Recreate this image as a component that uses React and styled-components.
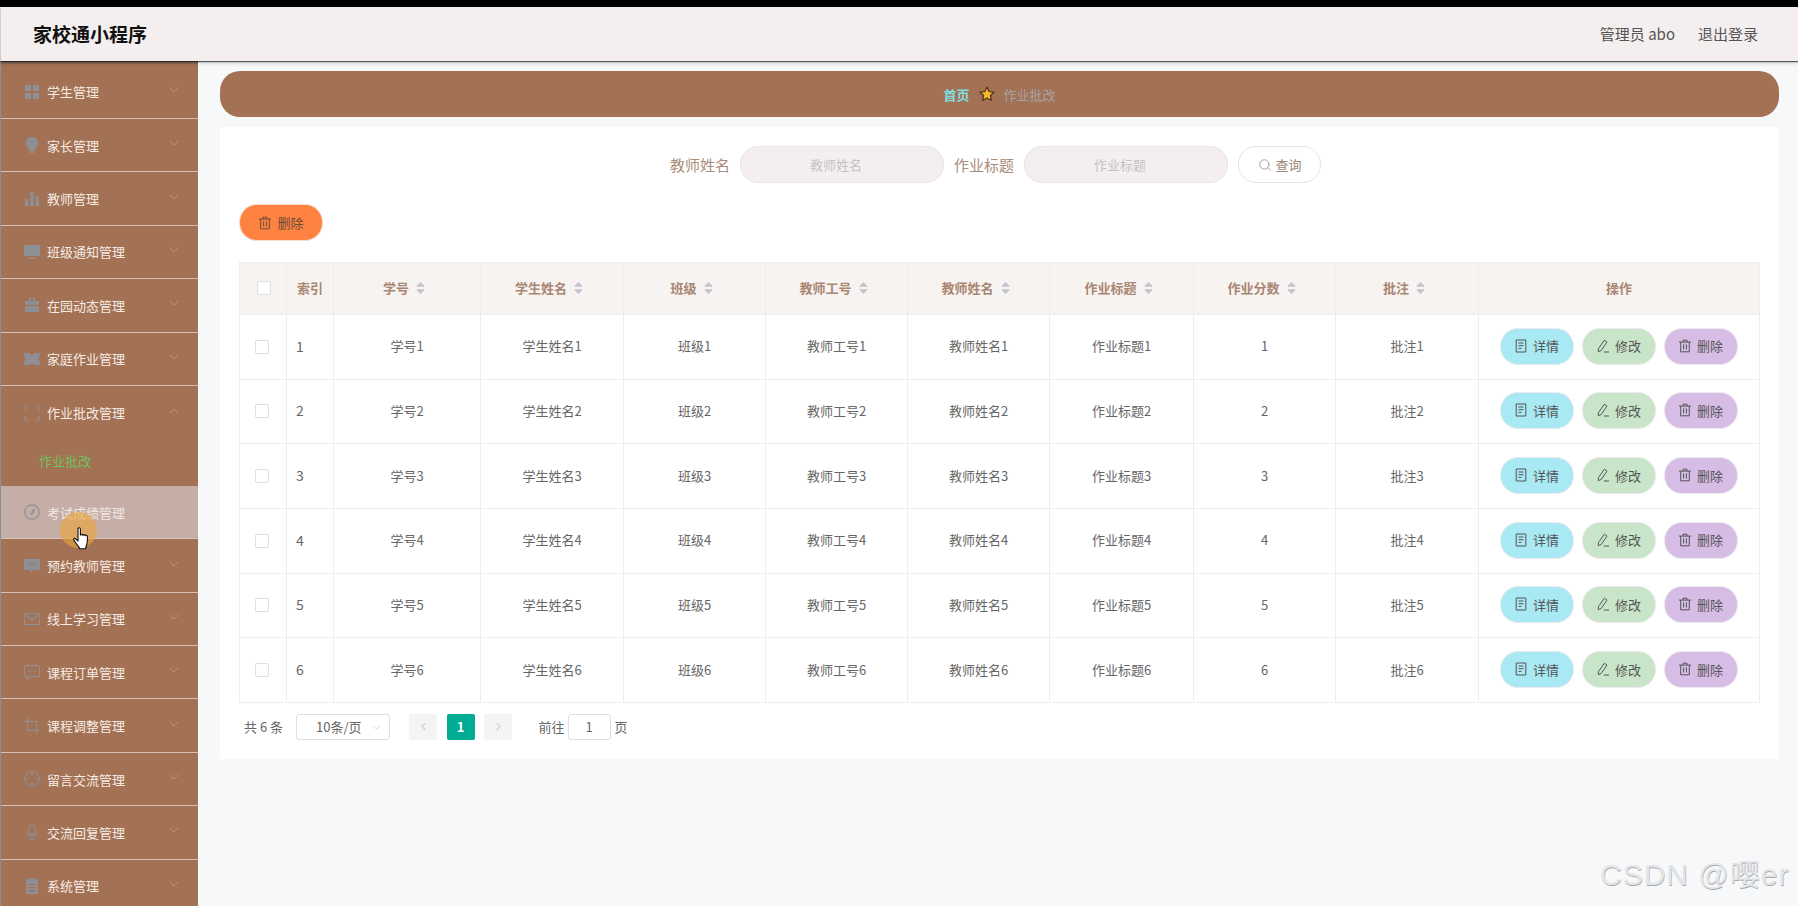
import styled, { createGlobalStyle } from "styled-components";
import { ChevronDown, ChevronUp, ChevronLeft, ChevronRight, Search } from "lucide-react";

const menus = [
  { name: "学生管理", icon: "grid" },
  { name: "家长管理", icon: "bulb" },
  { name: "教师管理", icon: "bars" },
  { name: "班级通知管理", icon: "monitor" },
  { name: "在园动态管理", icon: "case" },
  { name: "家庭作业管理", icon: "ticket" },
  { name: "作业批改管理", icon: "full", open: true, sub: "作业批改" },
  { name: "考试成绩管理", icon: "compass", hover: true },
  { name: "预约教师管理", icon: "chat" },
  { name: "线上学习管理", icon: "mail" },
  { name: "课程订单管理", icon: "chatline" },
  { name: "课程调整管理", icon: "crop" },
  { name: "留言交流管理", icon: "aim" },
  { name: "交流回复管理", icon: "mic" },
  { name: "系统管理", icon: "board" },
];

const columns = [
  { key: "no", title: "学号", w: 147 },
  { key: "student", title: "学生姓名", w: 143 },
  { key: "cls", title: "班级", w: 142 },
  { key: "tno", title: "教师工号", w: 142 },
  { key: "teacher", title: "教师姓名", w: 142 },
  { key: "work", title: "作业标题", w: 144 },
  { key: "score", title: "作业分数", w: 142 },
  { key: "note", title: "批注", w: 143 },
];

const rows = [1, 2, 3, 4, 5, 6];

const cellText = (key, n) => {
  if (key === "score") return n;
  const col = columns.find((c) => c.key === key);
  return col.title + n;
};

const MenuIcon = ({ type }) => {
  const shapes = {
    grid: (
      <path fill="currentColor" d="M1 1h6v6H1zM9 1h6v6H9zM1 9h6v6H1zM9 9h6v6H9z" />
    ),
    bulb: (
      <path fill="currentColor" d="M8 0a6.2 6.2 0 0 1 3.4 11.4V13H4.6v-1.6A6.2 6.2 0 0 1 8 0zM5.5 14h5v1l-1 1h-3l-1-1z" />
    ),
    bars: (
      <path fill="currentColor" d="M1 8h3.4v7H1zM6.3 1h3.4v14H6.3zM11.6 5H15v10h-3.4z" />
    ),
    monitor: (
      <path fill="currentColor" d="M0 1h16v11H0zM5 13.5h6V15H5z" />
    ),
    case: (
      <path fill="currentColor" d="M5 1h6v3h4v4H1V4h4zm1.3 1.3V4h3.4V2.3zM1 9h14v6H1z" />
    ),
    ticket: (
      <path fill="currentColor" d="M0 2h5l3 2 3-2h5v3l-2 3 2 3v3h-5l-3-2-3 2H0v-3l2-3-2-3z" />
    ),
    full: (
      <path fill="none" stroke="currentColor" strokeWidth="1.2" d="M1 5V1h4M11 1h4v4M15 11v4h-4M5 15H1v-4" />
    ),
    compass: (
      <g fill="none" stroke="currentColor" strokeWidth="1.2">
        <circle cx="8" cy="8" r="7.2" />
        <path fill="currentColor" stroke="none" d="M11.5 4 9.4 9.4 6.2 11.6l1.6-4.8z" />
      </g>
    ),
    chat: (
      <path fill="currentColor" fillRule="evenodd" d="M0 1h16v11H9l-2 3-1.5-3H0zm4 4.500v1.600h1.600V5.500zm3.200 0v1.600h1.600V5.500zm3.200 0v1.600H12V5.500z" />
    ),
    mail: (
      <path fill="none" stroke="currentColor" strokeWidth="1.1" d="M.6 2.500h14.800v11H.6zM1 3l7 6 7-6" />
    ),
    chatline: (
      <g>
        <path fill="none" stroke="currentColor" strokeWidth="1.1" d="M2 1.500h12a1.500 1.500 0 0 1 1.500 1.500v8a1.500 1.500 0 0 1-1.500 1.500H6l-3 2.500v-2.500H2A1.500 1.500 0 0 1 .5 11V3A1.500 1.500 0 0 1 2 1.500z" />
        <path fill="currentColor" d="M4 6.500h1.300v1.300H4zM7.300 6.500h1.300v1.300H7.300zM10.600 6.500h1.300v1.300h-1.300z" />
      </g>
    ),
    crop: (
      <path fill="none" stroke="currentColor" strokeWidth="1.200" d="M3.500 0v12.500H16M0 3.500h12.500V16" />
    ),
    aim: (
      <g fill="none" stroke="currentColor" strokeWidth="1.100">
        <circle cx="8" cy="8" r="7.200" />
        <path d="M8 .8v4M8 11.200v4M.8 8h4M11.200 8h4" />
      </g>
    ),
    mic: (
      <g fill="none" stroke="currentColor" strokeWidth="1.100">
        <rect x="5" y="0.600" width="6" height="10" rx="3" />
        <path d="M2.800 7.500a5.200 5.200 0 0 0 10.400 0M8 12.800V16M5.500 15.600h5" />
      </g>
    ),
    board: (
      <path fill="currentColor" fillRule="evenodd" d="M5.500 0h5v1.500H14V16H2V1.500h3.500zM4.500 6v1.200h7V6zm0 3v1.200h7V9zm0 3v1.200h7V12z" />
    ),
  };
  return (
    <IconBox viewBox="0 0 16 16" aria-hidden="true">
      {shapes[type]}
    </IconBox>
  );
};

const TrashIcon = () => (
  <ButtonIcon viewBox="0 0 14 14" aria-hidden="true">
    <path d="M1 3.100h12M5 3.100V1.200h4v1.900M2.700 3.100v9.700h8.600V3.100M5.600 5.400v5M8.400 5.400v5" />
  </ButtonIcon>
);

const DocIcon = () => (
  <ButtonIcon viewBox="0 0 14 14" aria-hidden="true">
    <path d="M2.200 1h9.600v12H2.200zM4.500 4h5M4.500 6.700h5M4.500 9.400h3" />
  </ButtonIcon>
);

const EditIcon = () => (
  <ButtonIcon viewBox="0 0 14 14" aria-hidden="true">
    <path d="M8.400 1.200 11 3.100 5.100 11.600 2.300 12.600 2.400 9.700zM7.800 13h5.200" />
  </ButtonIcon>
);

const SortCaret = () => (
  <CaretSvg viewBox="0 0 9 12" aria-hidden="true">
    <path fill="#c0c4cc" d="M4.500 0 9 4.700H0zM0 7.300h9L4.500 12z" />
  </CaretSvg>
);

const App = () => {
  return (
    <Page>
      <GlobalStyle />
      <BlackBar />
      <Header>
        <Title>家校通小程序</Title>
        <HeaderRight>
          <span>管理员 abo</span>
          <span>退出登录</span>
        </HeaderRight>
      </Header>
      <Body>
        <Sidebar>
          {menus.map((m) => (
            <div key={m.name}>
              <MenuItem $hover={m.hover} $open={m.open}>
                <MenuIcon type={m.icon} />
                <MenuText>{m.name}</MenuText>
                <Arrow>{m.open ? <ChevronUp size={16} strokeWidth={1} /> : <ChevronDown size={16} strokeWidth={1} />}</Arrow>
              </MenuItem>
              {m.sub && <SubItem>{m.sub}</SubItem>}
            </div>
          ))}
        </Sidebar>
        <Main>
          <Breadcrumb>
            <HomeLink>首页</HomeLink>
            <svg width="16" height="16" viewBox="0 0 16 16" aria-hidden="true">
              <path fill="#f8b72f" stroke="#57381c" strokeWidth="1.300" strokeLinejoin="round" d="m8 1 2.100 4.600 4.900.6-3.600 3.300 1 4.900L8 12l-4.400 2.400 1-4.900L1 6.200l4.900-.6z" />
            </svg>
            <CrumbText>作业批改</CrumbText>
          </Breadcrumb>
          <Card>
            <SearchRow>
              <FieldLabel>教师姓名</FieldLabel>
              <SearchInput>教师姓名</SearchInput>
              <FieldLabel>作业标题</FieldLabel>
              <SearchInput>作业标题</SearchInput>
              <QueryButton>
                <Search size={14} strokeWidth={1.2} color="#8a7a72" />
                查询
              </QueryButton>
            </SearchRow>
            <DeleteButton>
              <TrashIcon />
              删除
            </DeleteButton>
            <Table>
              <colgroup>
                <col style={{ width: 47 }} />
                <col style={{ width: 47 }} />
                {columns.map((c) => (
                  <col key={c.key} style={{ width: c.w }} />
                ))}
                <col />
              </colgroup>
              <thead>
                <tr>
                  <HeadCell>
                    <CheckBox $head />
                  </HeadCell>
                  <HeadCell>索引</HeadCell>
                  {columns.map((c) => (
                    <HeadCell key={c.key}>
                      <HeadInner>
                        {c.title}
                        <SortCaret />
                      </HeadInner>
                    </HeadCell>
                  ))}
                  <HeadCell>操作</HeadCell>
                </tr>
              </thead>
              <tbody>
                {rows.map((n) => (
                  <tr key={n}>
                    <Cell>
                      <CheckBox />
                    </Cell>
                    <IndexCell>{n}</IndexCell>
                    {columns.map((c) => (
                      <TextCell key={c.key}>{cellText(c.key, n)}</TextCell>
                    ))}
                    <Cell>
                      <Actions>
                        <ActionButton $bg="#a9e9f3">
                          <DocIcon />
                          详情
                        </ActionButton>
                        <ActionButton $bg="#c9e5c9">
                          <EditIcon />
                          修改
                        </ActionButton>
                        <ActionButton $bg="#d5bde6">
                          <TrashIcon />
                          删除
                        </ActionButton>
                      </Actions>
                    </Cell>
                  </tr>
                ))}
              </tbody>
            </Table>
            <Pager>
              <Total>共 6 条</Total>
              <SizeSelect>
                10条/页
                <SelectArrow>
                  <ChevronDown size={13} strokeWidth={1} />
                </SelectArrow>
              </SizeSelect>
              <PageButton>
                <ChevronLeft size={13} strokeWidth={1.6} />
              </PageButton>
              <PageButton $active>1</PageButton>
              <PageButton>
                <ChevronRight size={13} strokeWidth={1.6} />
              </PageButton>
              <JumpText>前往</JumpText>
              <JumpInput>1</JumpInput>
              <Total>页</Total>
            </Pager>
          </Card>
        </Main>
      </Body>
      <CursorGlow />
      <CursorHand viewBox="0 0 18 24" aria-hidden="true">
        <path fill="#fff" stroke="#111" strokeWidth="1.100" strokeLinejoin="round" d="M5 1.800c0-1.500 2.400-1.500 2.400 0v6.400c.3-1.300 2.300-1.200 2.400.2.300-1.100 2.200-1 2.300.4.500-.9 2.200-.6 2.300.8.100 2.700.200 5.300-.6 7.600-.6 1.700-1 3-1.200 4.500H6.700c-.6-1.700-1.800-3-3.200-4.700-1-1.200-2-2.600-2.700-3.900-.7-1.300 1-2.400 2-1.300L5 14z" />
      </CursorHand>
      <Watermark>CSDN @嘤er</Watermark>
    </Page>
  );
};

export default App;

const GlobalStyle = createGlobalStyle`
  html, body {
    margin: 0;
    padding: 0;
    overflow: hidden;
    background: #f6f8fa;
  }
  * {
    box-sizing: border-box;
  }
  body {
    font-family: "Noto Sans CJK SC", "Liberation Sans", sans-serif;
  }
`;

const Page = styled.div`
  position: relative;
  width: 1798px;
  height: 906px;
  overflow: hidden;
  background: #f6f8fa;
`;

const BlackBar = styled.div`
  height: 7px;
  background: #000;
`;

const Header = styled.header`
  position: relative;
  z-index: 2;
  height: 54px;
  margin-left: 1px;
  display: flex;
  align-items: center;
  justify-content: space-between;
  padding: 0 40px 2px 32px;
  background: #f4eeee;
  box-shadow: 0 1px 1px rgba(0, 0, 0, 0.6), 0 2px 4px rgba(0, 0, 0, 0.18);
`;

const Title = styled.div`
  font-size: 19px;
  font-weight: 700;
  color: #111;
`;

const HeaderRight = styled.div`
  display: flex;
  gap: 23px;
  font-size: 15px;
  color: #555;
`;

const Body = styled.div`
  display: flex;
  height: 845px;
`;

const Sidebar = styled.aside`
  width: 198px;
  flex-shrink: 0;
  height: 100%;
  overflow: hidden;
  padding-top: 1.600px;
  border-top: 3px solid #84695a;
  border-left: 1px solid #8d9096;
  background: #a37153;
`;

const MenuItem = styled.div`
  height: 53.400px;
  display: flex;
  align-items: center;
  padding-left: 23px;
  color: ${(props) => (props.$hover ? "#f1e7e2" : "#f6ece6")};
  background: ${(props) => (props.$hover ? "#c4aea5" : "transparent")};
  border-bottom: ${(props) => (props.$open ? "none" : "1px solid #d5c2b7")};
`;

const IconBox = styled.svg`
  width: 16px;
  height: 16px;
  flex-shrink: 0;
  color: #8e8f95;
`;

const MenuText = styled.span`
  margin-left: 7px;
  font-size: 13px;
  flex: 1;
`;

const Arrow = styled.span`
  display: flex;
  margin: -4px 16px 0 0;
  color: #c3a390;
`;

const SubItem = styled.div`
  height: 46.600px;
  padding: 12px 0 0 38px;
  font-size: 13px;
  color: #6fc260;
`;

const Main = styled.main`
  flex: 1;
  padding: 10px 20px 0 22px;
`;

const Breadcrumb = styled.div`
  height: 46px;
  display: flex;
  align-items: center;
  justify-content: center;
  gap: 9px;
  border-radius: 20px;
  background: #a37153;
  font-size: 13px;
`;

const HomeLink = styled.span`
  font-weight: 700;
  color: #7fdde2;
`;

const CrumbText = styled.span`
  color: #a5a3aa;
`;

const Card = styled.section`
  margin-top: 10px;
  height: 632px;
  padding: 19px 19px 0;
  background: #fff;
`;

const SearchRow = styled.div`
  display: flex;
  align-items: center;
  justify-content: center;
  gap: 10px;
  padding-right: 8px;
`;

const FieldLabel = styled.label`
  font-size: 15px;
  color: #ab8b7a;
`;

const SearchInput = styled.div`
  width: 204px;
  height: 37px;
  display: flex;
  align-items: center;
  justify-content: center;
  padding-right: 12px;
  border: 1px solid #e8e4e8;
  border-radius: 18px;
  background: #f4eeee;
  font-size: 13px;
  color: #c4c2c8;
`;

const QueryButton = styled.button`
  width: 83px;
  height: 37px;
  display: flex;
  align-items: center;
  justify-content: center;
  gap: 4px;
  border: 1px solid #e6e4e6;
  border-radius: 18px;
  background: #fff;
  font: inherit;
  font-size: 13px;
  color: #9a8679;
`;

const DeleteButton = styled.button`
  width: 84px;
  height: 37px;
  margin-top: 21px;
  display: flex;
  align-items: center;
  justify-content: center;
  gap: 5px;
  padding: 0;
  border: 1px solid #f8dccb;
  border-radius: 18px;
  background: #fe8341;
  font: inherit;
  font-size: 13px;
  color: #6b4a3a;
`;

const ButtonIcon = styled.svg`
  width: 14px;
  height: 14px;
  flex-shrink: 0;
  fill: none;
  stroke: currentColor;
  stroke-width: 1;
`;

const Table = styled.table`
  width: 1521px;
  margin-top: 21px;
  table-layout: fixed;
  border-collapse: collapse;
`;

const HeadCell = styled.th`
  height: 52px;
  padding: 0 0 2px;
  border: 1px solid #ebeef5;
  background: #f7f3f1;
  font-size: 13px;
  font-weight: 700;
  color: #a98672;
  text-align: center;
`;

const HeadInner = styled.span`
  display: inline-flex;
  align-items: center;
  gap: 7px;
  margin-right: 6px;
`;

const CaretSvg = styled.svg`
  width: 9px;
  height: 12px;
`;

const Cell = styled.td`
  height: 64.660px;
  padding: 0;
  border: 1px solid #ebeef5;
  font-size: 13px;
  color: #666;
  text-align: center;
`;

const TextCell = styled(Cell)`
  padding-bottom: 2px;
`;

const IndexCell = styled(Cell)`
  padding: 0 0 2px 9px;
  font-size: 14px;
  text-align: left;
`;

const CheckBox = styled.span`
  display: block;
  width: 14px;
  height: 14px;
  margin-left: ${(props) => (props.$head ? "17px" : "15px")};
  border: 1px solid #dcdfe6;
  border-radius: 2px;
  background: #fff;
`;

const Actions = styled.div`
  display: flex;
  justify-content: center;
  gap: 8px;
  padding-right: 1px;
  margin-top: -1px;
`;

const ActionButton = styled.button`
  width: 74px;
  height: 37px;
  display: flex;
  align-items: center;
  justify-content: center;
  gap: 5px;
  padding: 0 0 1px;
  border: 1px solid #eceaec;
  border-radius: 18px;
  background: ${(props) => props.$bg};
  font: inherit;
  font-size: 13px;
  color: #555;
`;

const Pager = styled.div`
  display: flex;
  align-items: center;
  height: 26px;
  margin-top: 11px;
  padding-left: 5px;
  font-size: 13px;
  color: #666;
`;

const Total = styled.span`
  font-size: 13px;
  color: #666;
`;

const SizeSelect = styled.div`
  position: relative;
  width: 94px;
  height: 26px;
  margin: 0 19px 0 13px;
  padding-left: 19px;
  line-height: 24px;
  border: 1px solid #dcdfe6;
  border-radius: 3px;
  color: #666;
`;

const SelectArrow = styled.span`
  position: absolute;
  right: 6px;
  top: 6px;
  display: flex;
  color: #b4b7be;
`;

const PageButton = styled.div`
  width: 28px;
  height: 26px;
  margin-right: 9.500px;
  display: flex;
  align-items: center;
  justify-content: center;
  border-radius: 2px;
  background: ${(props) => (props.$active ? "#00ac94" : "#f4f4f5")};
  color: ${(props) => (props.$active ? "#fff" : "#a8abb2")};
  font-weight: 700;
`;

const JumpText = styled.span`
  margin-left: 17px;
`;

const JumpInput = styled.div`
  width: 43px;
  height: 26px;
  margin: 0 4px 0 3px;
  line-height: 24px;
  text-align: center;
  border: 1px solid #dcdfe6;
  border-radius: 3px;
`;

const CursorGlow = styled.div`
  position: absolute;
  left: 60px;
  top: 512px;
  width: 37px;
  height: 36px;
  border-radius: 50%;
  background: rgba(238, 165, 60, 0.62);
`;

const CursorHand = styled.svg`
  position: absolute;
  left: 73px;
  top: 527px;
  width: 18px;
  height: 24px;
`;

const Watermark = styled.div`
  position: absolute;
  left: 1600px;
  top: 850px;
  font-family: "Liberation Sans", "Noto Sans CJK SC", sans-serif;
  font-size: 30px;
  letter-spacing: 1px;
  color: #e4e5e7;
  text-shadow: 0.5px 0.5px 0.5px #a9a9a9;
`;
